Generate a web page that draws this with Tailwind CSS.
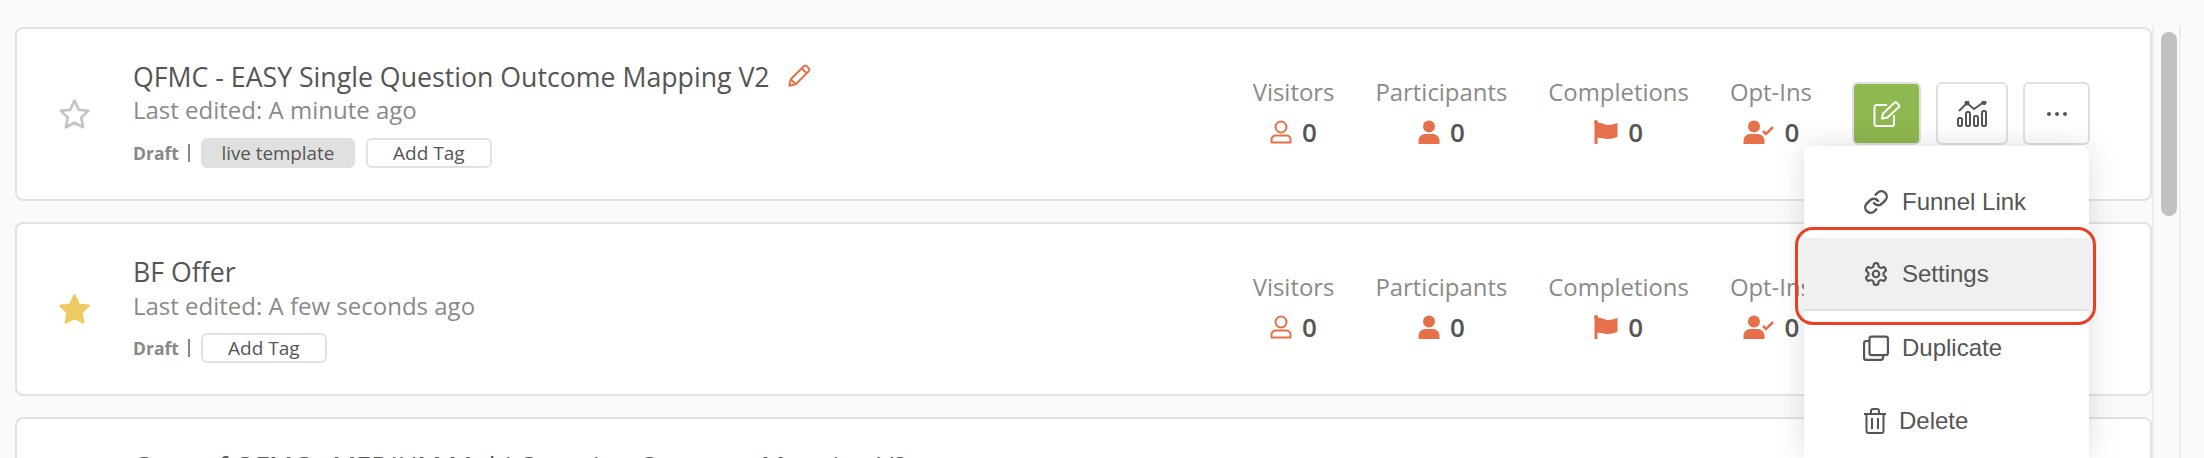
<!DOCTYPE html>
<html>
    <head>
        <meta charset="UTF-8">
        <meta name="viewport" content="width=device-width, initial-scale=1.0">
        <script src="https://cdn.jsdelivr.net/npm/@tailwindcss/browser@4"></script>
    </head>
    <body class="relative w-[2204px] h-[458px] overflow-hidden flex bg-[#fafafa] font-['Open_Sans',sans-serif] text-[#555555]">
        <!-- funnel list -->
        <main class="w-[2137px] h-[458px] overflow-hidden ml-[15px] pt-[27px] flex flex-col gap-[21px] shrink-0">
            <!-- card 1 -->
            <article class="h-[174px] shrink-0 flex border-2 border-[#e2e2e2] rounded-[8px] bg-white">
                <div class="w-[116px] pl-[39px] flex items-center shrink-0">
                    <svg class="w-[37px] h-[35px]" viewBox="0 0 24 24" fill="none" stroke="#c4c4c4" stroke-width="1.8" stroke-linejoin="round"><path d="M12 2.5l2.900 6.200 6.600.8-4.900 4.600 1.300 6.700-5.900-3.300-5.900 3.300 1.300-6.700-4.900-4.600 6.600-.8z"/></svg>
                </div>
                <div class="pt-[31px]">
                    <div class="flex items-center h-[34px] text-[26.7px] font-medium whitespace-nowrap">
                        QFMC - EASY Single Question Outcome Mapping V2
                        <svg class="ml-[16px] mb-[2px] w-[26px] h-[26px]" viewBox="0 0 24 24" fill="none" stroke="#e5704a" stroke-width="1.8" stroke-linejoin="round"><path d="M3 21l1.400-6L16.600 2.800a1.600 1.600 0 0 1 2.300 0l2.300 2.300a1.600 1.600 0 0 1 0 2.300L9 19.600z"/><path d="M14.500 5l4.500 4.500M4.400 15L9 19.600"/></svg>
                    </div>
                    <div class="h-[33px] leading-[31px] text-[24px] text-[#8a8a8a]">Last edited: A minute ago</div>
                    <div class="mt-[11px] flex items-center h-[30px]">
                        <span class="text-[17.5px] font-bold text-[#888888]">Draft</span>
                        <span class="ml-[9px] w-[2px] h-[18px] bg-[#888888]"></span>
                        <span class="ml-[11px] w-[154px] h-[30px] flex items-center justify-center rounded-[6px] bg-[#e0e0e0] text-[18.8px]">live template</span>
                        <span class="ml-[11px] w-[126px] h-[30px] flex items-center justify-center rounded-[6px] border-2 border-[#e2e2e2] text-[19px]">Add Tag</span>
                    </div>
                </div>
                <div class="ml-auto mt-[46px] flex gap-[41px] text-center">
                    <div>
                        <div class="h-[34px] leading-[34px] text-[23.9px] text-[#8a8a8a]">Visitors</div>
                        <div class="mt-[6px] h-[34px] flex items-center justify-center gap-[10px] text-[26px] font-semibold">
                            <svg class="w-[22px] h-[24px]" viewBox="0 0 22 24" fill="none" stroke="#e5704a" stroke-width="2"><circle cx="11" cy="7" r="5.500"/><path d="M1.500 22.500v-3a4 4 0 0 1 4-4h11a4 4 0 0 1 4 4v3z" stroke-linejoin="round"/></svg>
                            0
                        </div>
                    </div>
                    <div>
                        <div class="h-[34px] leading-[34px] text-[23.9px] text-[#8a8a8a]">Participants</div>
                        <div class="mt-[6px] h-[34px] flex items-center justify-center gap-[10px] text-[26px] font-semibold">
                            <svg class="w-[22px] h-[24px]" viewBox="0 0 22 24" fill="#e5704a"><circle cx="11" cy="6.500" r="6"/><path d="M0.500 24v-3.500a6.500 6.500 0 0 1 6.500-6.500h8a6.500 6.500 0 0 1 6.500 6.500v3.500z"/></svg>
                            0
                        </div>
                    </div>
                    <div>
                        <div class="h-[34px] leading-[34px] text-[23.9px] text-[#8a8a8a]">Completions</div>
                        <div class="mt-[6px] h-[34px] flex items-center justify-center gap-[10px] text-[26px] font-semibold">
                            <svg class="w-[24px] h-[24px]" viewBox="0 0 24 24" fill="#e5704a"><circle cx="2" cy="2" r="2"/><rect x="0.500" y="1" width="3" height="23"/><path d="M3 3c4-1 7 2 10.500 2 4 0 6-1 10-2v14c-4 1-6 2-10 2-3.500 0-6.500-2-10.500-1z"/></svg>
                            0
                        </div>
                    </div>
                    <div>
                        <div class="h-[34px] leading-[34px] text-[23.9px] text-[#8a8a8a]">Opt-Ins</div>
                        <div class="mt-[6px] h-[34px] flex items-center justify-center gap-[10px] text-[26px] font-semibold">
                            <svg class="w-[32px] h-[24px]" viewBox="0 0 32 24" fill="#e5704a"><circle cx="11" cy="6.500" r="6"/><path d="M0.500 24v-3.500a6.500 6.500 0 0 1 6.500-6.500h8a6.500 6.500 0 0 1 6.500 6.500v3.500z"/><path d="M20 11l3 3 7-7" fill="none" stroke="#e5704a" stroke-width="2.500"/></svg>
                            0
                        </div>
                    </div>
                </div>
                <div class="ml-[40px] mr-[60px] mt-[53px] flex gap-[15px] h-[63px] w-[238px] shrink-0">
                    <button class="w-[69px] h-[63px] flex items-center justify-center rounded-[6px] border-2 border-[#e0e0e0] bg-[#8fb850]">
                        <svg class="w-[28px] h-[26px]" viewBox="0 0 28 26" fill="none" stroke="#ffffff" stroke-width="2" stroke-linejoin="round"><path d="M14 4H3.500a2 2 0 0 0-2 2v17a2 2 0 0 0 2 2H19a2 2 0 0 0 2-2V14"/><path d="M9 17.500l1-5L21.500 1.800a1.500 1.500 0 0 1 2.100 0l2.300 2.200a1.500 1.500 0 0 1 0 2.100L14.500 16.500z"/></svg>
                    </button>
                    <button class="w-[72px] h-[63px] flex items-center justify-center rounded-[6px] border-2 border-[#e0e0e0] bg-white">
                        <svg class="w-[30px] h-[26px]" viewBox="0 0 30 26" fill="none" stroke="#555555" stroke-width="2"><rect x="1" y="17" width="4" height="8" rx="1.500"/><rect x="9" y="11" width="4" height="14" rx="1.500"/><rect x="17" y="15" width="4" height="10" rx="1.500"/><rect x="25" y="10" width="4" height="15" rx="1.500"/><path d="M2 10l8-8 7 6 10-7"/><circle cx="10" cy="2" r="1.500" fill="#555555"/><circle cx="27" cy="1.500" r="1.500" fill="#555555"/></svg>
                    </button>
                    <button class="w-[67px] h-[63px] flex items-center justify-center gap-[4px] rounded-[6px] border-2 border-[#e0e0e0] bg-white">
                        <span class="w-[4px] h-[4px] rounded-full bg-[#555555]"></span>
                        <span class="w-[4px] h-[4px] rounded-full bg-[#555555]"></span>
                        <span class="w-[4px] h-[4px] rounded-full bg-[#555555]"></span>
                    </button>
                </div>
            </article>

            <!-- card 2 -->
            <article class="h-[174px] shrink-0 flex border-2 border-[#e2e2e2] rounded-[8px] bg-white">
                <div class="w-[116px] pl-[39px] flex items-center shrink-0">
                    <svg class="w-[37px] h-[35px]" viewBox="0 0 24 24" fill="#eecb62" stroke="#eecb62" stroke-width="1.8" stroke-linejoin="round"><path d="M12 2.500l2.900 6.200 6.600.8-4.900 4.600 1.300 6.700-5.900-3.300-5.900 3.300 1.300-6.700-4.900-4.600 6.600-.8z"/></svg>
                </div>
                <div class="pt-[31px]">
                    <div class="flex items-center h-[34px] text-[26.7px] font-medium">BF Offer</div>
                    <div class="h-[33px] leading-[33px] text-[24px] text-[#8a8a8a]">Last edited: A few seconds ago</div>
                    <div class="mt-[11px] flex items-center h-[30px]">
                        <span class="text-[17.5px] font-bold text-[#888888]">Draft</span>
                        <span class="ml-[9px] w-[2px] h-[18px] bg-[#888888]"></span>
                        <span class="ml-[11px] w-[126px] h-[30px] flex items-center justify-center rounded-[6px] border-2 border-[#e2e2e2] text-[19px]">Add Tag</span>
                    </div>
                </div>
                <div class="ml-auto mt-[46px] flex gap-[41px] text-center">
                    <div>
                        <div class="h-[34px] leading-[34px] text-[23.9px] text-[#8a8a8a]">Visitors</div>
                        <div class="mt-[6px] h-[34px] flex items-center justify-center gap-[10px] text-[26px] font-semibold">
                            <svg class="w-[22px] h-[24px]" viewBox="0 0 22 24" fill="none" stroke="#e5704a" stroke-width="2"><circle cx="11" cy="7" r="5.500"/><path d="M1.500 22.500v-3a4 4 0 0 1 4-4h11a4 4 0 0 1 4 4v3z" stroke-linejoin="round"/></svg>
                            0
                        </div>
                    </div>
                    <div>
                        <div class="h-[34px] leading-[34px] text-[23.9px] text-[#8a8a8a]">Participants</div>
                        <div class="mt-[6px] h-[34px] flex items-center justify-center gap-[10px] text-[26px] font-semibold">
                            <svg class="w-[22px] h-[24px]" viewBox="0 0 22 24" fill="#e5704a"><circle cx="11" cy="6.500" r="6"/><path d="M0.500 24v-3.500a6.500 6.500 0 0 1 6.500-6.500h8a6.500 6.500 0 0 1 6.500 6.500v3.500z"/></svg>
                            0
                        </div>
                    </div>
                    <div>
                        <div class="h-[34px] leading-[34px] text-[23.9px] text-[#8a8a8a]">Completions</div>
                        <div class="mt-[6px] h-[34px] flex items-center justify-center gap-[10px] text-[26px] font-semibold">
                            <svg class="w-[24px] h-[24px]" viewBox="0 0 24 24" fill="#e5704a"><circle cx="2" cy="2" r="2"/><rect x="0.500" y="1" width="3" height="23"/><path d="M3 3c4-1 7 2 10.500 2 4 0 6-1 10-2v14c-4 1-6 2-10 2-3.500 0-6.500-2-10.500-1z"/></svg>
                            0
                        </div>
                    </div>
                    <div>
                        <div class="h-[34px] leading-[34px] text-[23.9px] text-[#8a8a8a]">Opt-Ins</div>
                        <div class="mt-[6px] h-[34px] flex items-center justify-center gap-[10px] text-[26px] font-semibold">
                            <svg class="w-[32px] h-[24px]" viewBox="0 0 32 24" fill="#e5704a"><circle cx="11" cy="6.500" r="6"/><path d="M0.500 24v-3.500a6.500 6.500 0 0 1 6.500-6.500h8a6.500 6.500 0 0 1 6.500 6.500v3.500z"/><path d="M20 11l3 3 7-7" fill="none" stroke="#e5704a" stroke-width="2.500"/></svg>
                            0
                        </div>
                    </div>
                </div>
                <div class="ml-[40px] mr-[60px] w-[238px] shrink-0"></div>
            </article>

            <!-- card 3, cut off by the window -->
            <article class="h-[174px] shrink-0 flex border-2 border-[#e2e2e2] rounded-[8px] bg-white">
                <div class="w-[116px] shrink-0"></div>
                <div class="pt-[31px]">
                    <div class="flex items-center h-[34px] text-[26.7px] font-medium">Copy of QFMC - MEDIUM Multi Question Outcome Mapping V2</div>
                </div>
            </article>
        </main>

        <!-- scrollbar -->
        <div class="mt-[26px] w-[29px] h-[432px] shrink-0 pl-[7px] border-x-2 border-[#ececec] bg-[#fafafa]">
            <div class="mt-[6px] w-[16px] h-[184px] rounded-full bg-[#c1c1c1]"></div>
        </div>

        <!-- dropdown menu -->
        <div class="absolute left-[1804px] top-[146px] w-[285px] h-[312px] pt-[20px] rounded-t-[8px] bg-white shadow-[0_0_30px_rgba(0,0,0,0.13)] font-['Liberation_Sans',sans-serif] text-[24px]">
            <div class="h-[72px] flex items-center pl-[59px]">
                <svg class="w-[26px] h-[26px]" viewBox="0 0 24 24" fill="none" stroke="#555555" stroke-width="2.200" stroke-linecap="round"><path d="M10 13a5 5 0 0 0 7.540.54l3-3a5 5 0 0 0-7.070-7.070l-1.720 1.710"/><path d="M14 11a5 5 0 0 0-7.540-.54l-3 3a5 5 0 0 0 7.070 7.070l1.710-1.710"/></svg>
                <span class="ml-[13px]">Funnel Link</span>
            </div>
            <div class="h-[73px] flex items-center pl-[59px] bg-[#f0f0f0] border-b-2 border-[#e0e0e0]">
                <svg class="w-[26px] h-[26px]" viewBox="0 0 24 24" fill="none" stroke="#555555" stroke-width="2"><path d="M12.220 2h-.44a2 2 0 0 0-2 2v.18a2 2 0 0 1-1 1.730l-.43.25a2 2 0 0 1-2 0l-.15-.08a2 2 0 0 0-2.730.73l-.22.38a2 2 0 0 0 .73 2.730l.15.1a2 2 0 0 1 1 1.720v.51a2 2 0 0 1-1 1.740l-.15.09a2 2 0 0 0-.73 2.730l.22.38a2 2 0 0 0 2.730.73l.15-.08a2 2 0 0 1 2 0l.43.25a2 2 0 0 1 1 1.730V20a2 2 0 0 0 2 2h.44a2 2 0 0 0 2-2v-.18a2 2 0 0 1 1-1.730l.43-.25a2 2 0 0 1 2 0l.15.08a2 2 0 0 0 2.730-.73l.22-.39a2 2 0 0 0-.73-2.730l-.15-.08a2 2 0 0 1-1-1.740v-.5a2 2 0 0 1 1-1.740l.15-.09a2 2 0 0 0 .73-2.730l-.22-.38a2 2 0 0 0-2.730-.73l-.15.08a2 2 0 0 1-2 0l-.43-.25a2 2 0 0 1-1-1.730V4a2 2 0 0 0-2-2z"/><circle cx="12" cy="12" r="3"/></svg>
                <span class="ml-[13px]">Settings</span>
            </div>
            <div class="h-[73px] flex items-center pl-[59px]">
                <svg class="w-[26px] h-[26px]" viewBox="0 0 24 24" fill="none" stroke="#555555" stroke-width="2" stroke-linejoin="round"><rect x="6" y="1.500" width="17" height="17" rx="2"/><path d="M6 5.500H3a2 2 0 0 0-2 2V21a2 2 0 0 0 2 2h13.500a2 2 0 0 0 2-2v-2.500"/></svg>
                <span class="ml-[13px]">Duplicate</span>
            </div>
            <div class="h-[73px] flex items-center pl-[59px]">
                <svg class="w-[24px] h-[26px]" viewBox="0 0 24 26" fill="none" stroke="#555555" stroke-width="2"><path d="M1 6h22M8 6V3a2 2 0 0 1 2-2h4a2 2 0 0 1 2 2v3M3.500 6v17a2 2 0 0 0 2 2h13a2 2 0 0 0 2-2V6M9 10v11M15 10v11"/></svg>
                <span class="ml-[12px]">Delete</span>
            </div>
        </div>

        <!-- red annotation round Settings -->
        <div class="absolute left-[1795px] top-[227px] w-[301px] h-[98px] rounded-[18px] border-[3px] border-[#ea3f23]"></div>
    </body>
</html>
